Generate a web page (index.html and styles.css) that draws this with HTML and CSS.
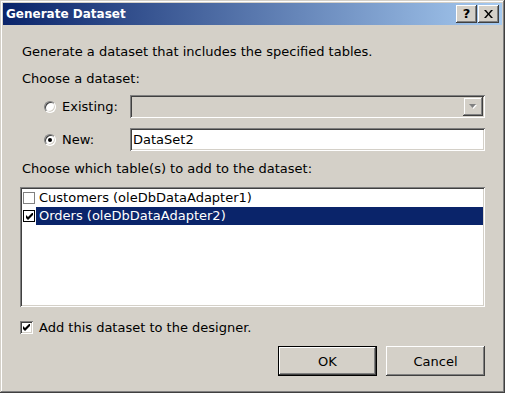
FILE: index.html
```html
<!DOCTYPE html>
<html lang="en">
<head>
    <meta charset="UTF-8">
    <title>Generate Dataset</title>
    <link rel="stylesheet" href="styles.css">
</head>
<body>
    <div class="window">
        <div class="titlebar">
            <span class="title">Generate Dataset</span>
            <div class="caption-buttons">
                <button class="caption-btn">?</button>
                <button class="caption-btn close">
                    <svg width="9" height="8" viewBox="0 0 9 8">
                        <path d="M0 0h2l2.5 3 2.5-3h2l-3.5 4 3.5 4h-2l-2.5-3-2.5 3h-2l3.5-4z" fill="#000"/>
                    </svg>
                </button>
            </div>
        </div>

        <div class="content">
            <p class="text intro">Generate a dataset that includes the specified tables.</p>
            <p class="text label">Choose a dataset:</p>

            <div class="option-row existing">
                <span class="radio"></span>
                <span class="option-label">Existing:</span>
                <div class="combo">
                    <span class="combo-btn">
                        <svg width="8" height="5" viewBox="0 0 8 5">
                            <path d="M1 1h7l-3.5 4z" fill="#fff"/>
                            <path d="M0 0h7l-3.5 4z" fill="#808080"/>
                        </svg>
                    </span>
                </div>
            </div>

            <div class="option-row new">
                <span class="radio checked"></span>
                <span class="option-label">New:</span>
                <div class="textbox">DataSet2</div>
            </div>

            <p class="text label tables-label">Choose which table(s) to add to the dataset:</p>

            <div class="listbox">
                <div class="list-item">
                    <span class="flat-check"></span>
                    <span class="item-text">Customers (oleDbDataAdapter1)</span>
                </div>
                <div class="list-item selected">
                    <span class="flat-check checked">
                        <svg width="7" height="7" viewBox="0 0 7 7">
                            <path d="M0 2v3l2 2 5-5v-3l-5 5z" fill="#000"/>
                        </svg>
                    </span>
                    <span class="item-text">Orders (oleDbDataAdapter2)</span>
                </div>
            </div>

            <div class="check-row">
                <span class="checkbox">
                    <svg width="7" height="7" viewBox="0 0 7 7">
                        <path d="M0 2v3l2 2 5-5v-3l-5 5z" fill="#000"/>
                    </svg>
                </span>
                <span class="check-label">Add this dataset to the designer.</span>
            </div>

            <div class="buttons">
                <button class="btn default">OK</button>
                <button class="btn">Cancel</button>
            </div>
        </div>
    </div>
</body>
</html>
```

FILE: styles.css
```css
body {
    margin: 0;
    background-color: #d4d0c8;
    font-family: Tahoma, "DejaVu Sans", sans-serif;
    font-size: 13px;
    color: #000;
}

.window {
    width: 505px;
    height: 393px;
    box-sizing: border-box;
    padding: 3px;
    background-color: #d4d0c8;
    box-shadow: inset -1px -1px #404040, inset 1px 1px #d4d0c8,
                inset -2px -2px #808080, inset 2px 2px #fff;
}

.titlebar {
    height: 22px;
    display: flex;
    align-items: center;
    justify-content: space-between;
    padding: 0 3px 0 3px;
    background: linear-gradient(to right, #0a246a, #a6caf0);
}

.title {
    color: #fff;
    font-weight: bold;
    font-size: 12px;
}

.caption-buttons {
    display: flex;
    gap: 1px;
}

.caption-btn {
    width: 21px;
    height: 18px;
    padding: 0;
    border: none;
    background-color: #d4d0c8;
    font-family: "DejaVu Sans", sans-serif;
    font-weight: bold;
    font-size: 13px;
    line-height: 18px;
    display: flex;
    align-items: center;
    justify-content: center;
    box-shadow: inset -1px -1px #404040, inset 1px 1px #fff,
                inset -2px -2px #808080, inset 2px 2px #d4d0c8;
}

.content {
    padding: 19px 17px 0 17px;
}

.text {
    margin: 0;
    padding-left: 2px;
    line-height: 16px;
}

.label {
    margin-top: 11px;
}

.tables-label {
    margin-top: 10px;
}

.option-row {
    display: flex;
    align-items: center;
    height: 23px;
    padding-left: 24px;
}

.existing {
    margin-top: 8px;
}

.new {
    margin-top: 10px;
}

.radio {
    width: 12px;
    height: 12px;
    border-radius: 50%;
    box-sizing: border-box;
    background-color: #fff;
    border: 1px solid;
    border-color: #808080 #fff #fff #808080;
    box-shadow: inset 1px 1px #404040, inset -1px -1px #d4d0c8;
    position: relative;
}

.radio.checked::after {
    content: "";
    position: absolute;
    left: 3px;
    top: 3px;
    width: 4px;
    height: 4px;
    border-radius: 50%;
    background-color: #000;
}

.option-label {
    width: 68px;
    padding-left: 6px;
}

.combo,
.textbox {
    width: 355px;
    height: 23px;
    box-sizing: border-box;
    box-shadow: inset 1px 1px #808080, inset -1px -1px #fff,
                inset 2px 2px #404040, inset -2px -2px #d4d0c8;
}

.combo {
    background-color: #d4d0c8;
    display: flex;
    justify-content: flex-end;
    padding: 2px;
}

.combo-btn {
    width: 20px;
    height: 19px;
    display: flex;
    align-items: center;
    justify-content: center;
    box-shadow: inset -1px -1px #404040, inset 1px 1px #d4d0c8,
                inset -2px -2px #808080, inset 2px 2px #fff;
}

.textbox {
    background-color: #fff;
    padding: 0 3px;
    line-height: 23px;
}

.listbox {
    margin-top: 10px;
    width: 465px;
    height: 120px;
    box-sizing: border-box;
    padding: 2px;
    background-color: #fff;
    box-shadow: inset 1px 1px #808080, inset -1px -1px #fff,
                inset 2px 2px #404040, inset -2px -2px #d4d0c8;
}

.list-item {
    display: flex;
    align-items: center;
    height: 18px;
    padding-left: 1px;
}

.flat-check {
    width: 12px;
    height: 12px;
    box-sizing: border-box;
    border: 1px solid #808080;
    background-color: #fff;
    display: flex;
    align-items: center;
    justify-content: center;
}

.flat-check.checked {
    border-color: #000;
}

.item-text {
    margin-left: 1px;
    padding-left: 3px;
    flex: 1;
    line-height: 18px;
}

.selected .item-text {
    background-color: #0a246a;
    color: #fff;
}

.check-row {
    margin-top: 12px;
    height: 16px;
    display: flex;
    align-items: center;
}

.checkbox {
    width: 13px;
    height: 13px;
    box-sizing: border-box;
    background-color: #fff;
    display: flex;
    align-items: center;
    justify-content: center;
    box-shadow: inset 1px 1px #808080, inset -1px -1px #fff,
                inset 2px 2px #404040, inset -2px -2px #d4d0c8;
}

.check-label {
    margin-left: 6px;
}

.buttons {
    margin-top: 11px;
    width: 465px;
    display: flex;
    justify-content: flex-end;
    gap: 9px;
}

.btn {
    width: 99px;
    height: 30px;
    border: none;
    background-color: #d4d0c8;
    font-family: Tahoma, "DejaVu Sans", sans-serif;
    font-size: 13px;
    color: #000;
    box-shadow: inset -1px -1px #404040, inset 1px 1px #fff,
                inset -2px -2px #808080, inset 2px 2px #d4d0c8;
}

.btn.default {
    box-shadow: inset 0 0 0 1px #000, inset -2px -2px #404040, inset 2px 2px #fff,
                inset -3px -3px #808080;
}
```
